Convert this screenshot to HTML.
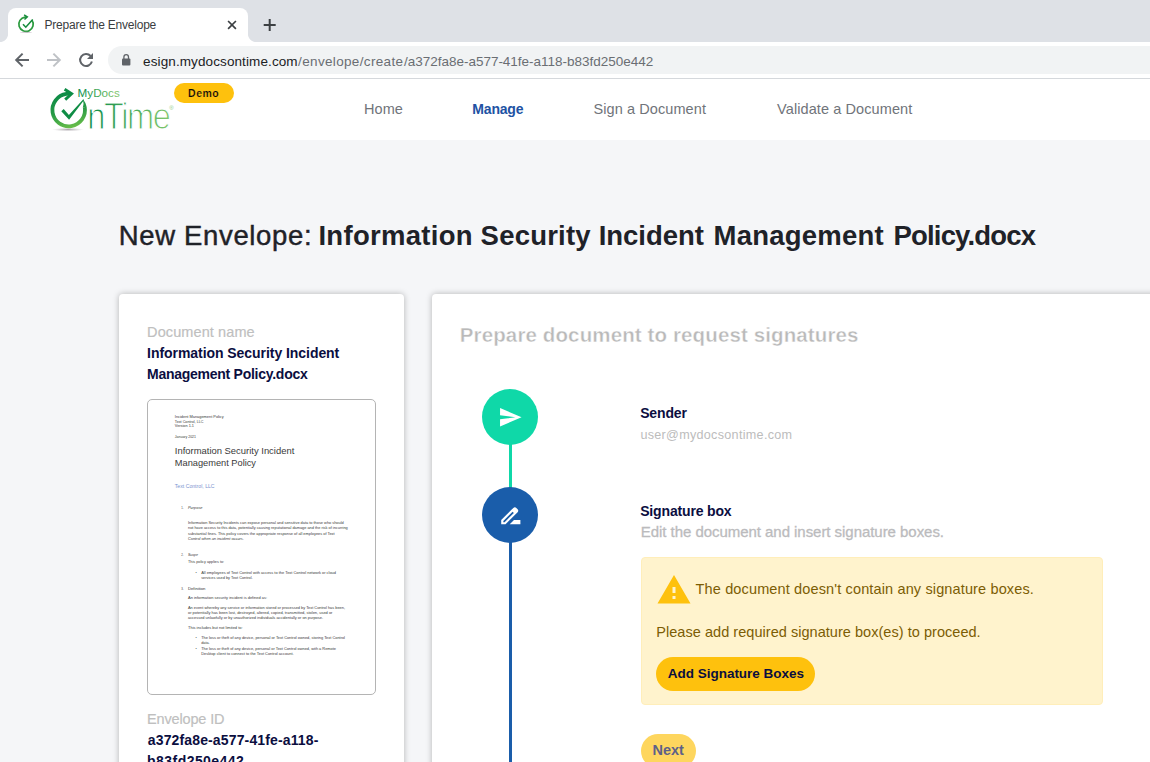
<!DOCTYPE html>
<html lang="en">
<head>
<meta charset="utf-8">
<title>Prepare the Envelope</title>
<style>
*{box-sizing:border-box;margin:0;padding:0}
html,body{width:1150px;height:762px;overflow:hidden;background:#f5f6f8;font-family:"Liberation Sans",sans-serif;}
body{position:relative}
.abs{position:absolute}
.t{position:absolute;white-space:nowrap;line-height:20px}
svg{position:absolute;overflow:visible}
/* browser chrome */
#tabbar{left:0;top:0;width:1150px;height:42px;background:#dee1e6}
#tab{left:8px;top:8px;width:240px;height:34px;background:#fff;border-radius:8px 8px 0 0}
#tabl{left:0;top:34px;width:8px;height:8px;background:radial-gradient(circle at 0 0,#dee1e6 7.6px,#fff 8.4px)}
#tabr{left:248px;top:34px;width:8px;height:8px;background:radial-gradient(circle at 100% 0,#dee1e6 7.6px,#fff 8.4px)}
#toolbar{left:0;top:42px;width:1150px;height:36px;background:#fff}
#tbline{left:0;top:78px;width:1150px;height:1px;background:#d5d8dc}
#omni{left:108px;top:46px;width:1100px;height:28px;border-radius:14px;background:#f1f3f4}
/* site header */
#hdr{left:0;top:79px;width:1150px;height:61px;background:#fff}
#demo{left:174px;top:83px;width:60px;height:20px;border-radius:10px;background:#fec10d}
/* cards */
.card{background:#fff;border-radius:4px;box-shadow:0 0 6px rgba(0,0,0,.27)}
#lcard{left:119px;top:294px;width:285px;height:500px}
#rcard{left:432px;top:294px;width:760px;height:500px}
#thumb{left:147px;top:399px;width:229px;height:296px;border:1px solid #b4b4b4;border-radius:5px;background:#fff}
/* timeline */
#c1{left:482px;top:389px;width:56px;height:56px;border-radius:50%;background:#0fd8a8}
#c2{left:482px;top:487px;width:56px;height:56px;border-radius:50%;background:#1a5daa}
#ln1{left:509px;top:440px;width:3px;height:50px;background:#0fd8a8}
#ln2{left:509px;top:540px;width:3px;height:240px;background:#1a5daa}
/* alert */
#alert{left:641px;top:557px;width:462px;height:148px;background:#fff3cd;border:1px solid #ffeeba;border-radius:4px}
#btn1{left:656px;top:657px;width:159px;height:34px;border-radius:17px;background:#fec10d}
#btn2{left:641px;top:734px;width:55px;height:34px;border-radius:17px;background:#fed65e}
</style>
</head>
<body>
<!-- ===== browser chrome ===== -->
<div id="tabbar" class="abs"></div>
<div id="tab" class="abs"></div>
<div id="tabl" class="abs"></div>
<div id="tabr" class="abs"></div>
<div id="toolbar" class="abs"></div>
<div id="tbline" class="abs"></div>
<div id="omni" class="abs"></div>
<svg id="chromeicons" style="left:0;top:0" width="300" height="80" viewBox="0 0 300 80">
  <!-- favicon -->
  <g fill="none" stroke="#2b9b3e" stroke-linecap="butt">
    <path d="M31.9 20.1 A7.2 7.2 0 1 1 25 17.1 L26.4 16.9" stroke-width="1.7"/>
    <path d="M24.1 14.9 L27.3 16.9 L24.5 19.5" stroke-width="1.5" stroke="#188c3e"/>
    <path d="M23 24.3 L25.8 27.2 L32.7 19.5" stroke-width="1.6" stroke="#188c3e"/>
  </g>
  <ellipse cx="26" cy="32.4" rx="6" ry="0.6" fill="#b9a9b9" opacity=".6"/>
  <!-- close / plus -->
  <path d="M228.1 21 L235.9 28.8 M235.9 21 L228.1 28.8" stroke="#3c4043" stroke-width="1.7" fill="none"/>
  <path d="M263.7 25 H275.7 M269.7 19 V31" stroke="#3c4043" stroke-width="2" fill="none"/>
  <!-- back -->
  <path d="M29 60 H17 M22.6 53.6 L16.2 60 L22.6 66.4" stroke="#5f6368" stroke-width="2" fill="none"/>
  <!-- forward -->
  <path d="M47 60 H59 M53.4 53.6 L59.8 60 L53.4 66.4" stroke="#bfc2c6" stroke-width="2" fill="none"/>
  <!-- reload -->
  <path d="M90.6 56 A6 6 0 1 0 91.9 61.6" stroke="#5f6368" stroke-width="2" fill="none"/>
  <path d="M93 53 V59 H87 Z" fill="#5f6368"/>
  <!-- lock -->
  <rect x="122" y="58.6" width="8.4" height="6.8" rx="1" fill="#5f6368"/>
  <path d="M123.9 59 V57 A2.3 2.3 0 0 1 128.5 57 V59" stroke="#5f6368" stroke-width="1.3" fill="none"/>
</svg>

<!-- ===== site header ===== -->
<div id="hdr" class="abs"></div>
<div id="demo" class="abs"></div>
<svg id="logo" style="left:40px;top:80px" width="140" height="60" viewBox="40 80 140 60">
  <defs>
    <linearGradient id="g1" gradientUnits="userSpaceOnUse" x1="62" y1="92" x2="70" y2="128"><stop offset="0" stop-color="#0a8a47"/><stop offset="0.55" stop-color="#279a45"/><stop offset="1" stop-color="#69bd4a"/></linearGradient>
    <linearGradient id="g2" x1="0" y1="0" x2="1" y2="0"><stop offset="0" stop-color="#0a8a47"/><stop offset="1" stop-color="#85c96f"/></linearGradient>
    <linearGradient id="g4" gradientUnits="userSpaceOnUse" x1="0" y1="0" x2="96" y2="0"><stop offset="0" stop-color="#0a8a47"/><stop offset="1" stop-color="#85c96f"/></linearGradient>
    <radialGradient id="g3"><stop offset="0" stop-color="#8a7a8a" stop-opacity=".7"/><stop offset="1" stop-color="#b0b0b0" stop-opacity="0"/></radialGradient>
  </defs>
  <ellipse cx="68" cy="129.6" rx="16" ry="1.8" fill="url(#g3)"/>
  <path d="M84.75 107.17 A16.3 16.3 0 1 1 66.4 93.9 L70 93.6" stroke="url(#g1)" stroke-width="3.8" fill="none"/>
  <path d="M86.62 106.84 A18.2 18.2 0 0 0 82.9 98.9 Q84.1 103.6 82.85 107.5 Z" fill="url(#g1)"/>
  <path d="M64.6 89.2 L71.6 93.7 L65.2 99.6" stroke="#0d8c46" stroke-width="2.9" fill="none"/>
  <path d="M61.3 111.3 L63.7 109 L68.9 114.9 L83.3 99.2 L83.9 100.2 L69.1 119.8 Z" fill="#0f8d45"/>
  <text x="77.6" y="96.5" font-family="Liberation Sans, sans-serif" font-size="11.4" fill="url(#g2)" textLength="42.2" lengthAdjust="spacingAndGlyphs">MyDocs</text>
  <text transform="translate(87.2 129.3) scale(0.895 1)" x="0" y="0" font-family="Liberation Sans, sans-serif" font-size="36.5" letter-spacing="-1.6" fill="url(#g4)" stroke="#fff" stroke-width="1.15" stroke-linejoin="round">nTime</text>
  <text x="169.2" y="110.4" font-family="Liberation Sans, sans-serif" font-size="6" fill="#8fcd86">®</text>
</svg>

<!-- ===== cards ===== -->
<div id="lcard" class="abs card"></div>
<div id="thumb" class="abs"></div>
<svg id="thumbsvg" style="left:148px;top:400px" width="227" height="294" viewBox="148 400 227 294" font-family="Liberation Sans, sans-serif">
<text x="174.8" y="417.8" font-size="3.6" fill="#383838"  textLength="48.9" lengthAdjust="spacingAndGlyphs">Incident Management Policy</text>
<text x="174.8" y="422.5" font-size="3.6" fill="#383838"  textLength="28.7" lengthAdjust="spacingAndGlyphs">Text Control, LLC</text>
<text x="174.8" y="427.4" font-size="3.6" fill="#383838"  textLength="19.2" lengthAdjust="spacingAndGlyphs">Version 1.1</text>
<text x="174.8" y="437.5" font-size="3.6" fill="#383838"  textLength="21.2" lengthAdjust="spacingAndGlyphs">January 2021</text>
<text x="174.8" y="487.6" font-size="4.6" fill="#7b93cf"  textLength="39.8" lengthAdjust="spacingAndGlyphs">Text Control, LLC</text>
<text x="181.3" y="509.2" font-size="4.1" fill="#383838"  textLength="2.3" lengthAdjust="spacingAndGlyphs">1.</text>
<text x="188.0" y="509.2" font-size="4.1" fill="#333" font-style="italic" textLength="14.5" lengthAdjust="spacingAndGlyphs">Purpose</text>
<text x="188.0" y="523.9" font-size="4.1" fill="#383838"  textLength="155.7" lengthAdjust="spacingAndGlyphs">Information Security Incidents can expose personal and sensitive data to those who should</text>
<text x="188.0" y="529.4" font-size="4.1" fill="#383838"  textLength="159.7" lengthAdjust="spacingAndGlyphs">not have access to this data, potentially causing reputational damage and the risk of incurring</text>
<text x="188.0" y="534.8" font-size="4.1" fill="#383838"  textLength="146.6" lengthAdjust="spacingAndGlyphs">substantial fines. This policy covers the appropriate response of all employees of Text</text>
<text x="188.0" y="540.1" font-size="4.1" fill="#383838" font-style="italic" textLength="55.8" lengthAdjust="spacingAndGlyphs">Control when an incident occurs.</text>
<text x="181.3" y="555.5" font-size="4.1" fill="#383838"  textLength="2.3" lengthAdjust="spacingAndGlyphs">2.</text>
<text x="188.0" y="555.5" font-size="4.1" fill="#333" font-style="italic" textLength="10.0" lengthAdjust="spacingAndGlyphs">Scope</text>
<text x="188.0" y="563.2" font-size="4.1" fill="#383838"  textLength="36.1" lengthAdjust="spacingAndGlyphs">This policy applies to:</text>
<text x="195.6" y="573.7" font-size="4.1" fill="#333"  textLength="1.2" lengthAdjust="spacingAndGlyphs">•</text>
<text x="201.2" y="573.7" font-size="4.1" fill="#383838"  textLength="134.8" lengthAdjust="spacingAndGlyphs">All employees of Text Control with access to the Text Control network or cloud</text>
<text x="201.2" y="578.9" font-size="4.1" fill="#383838"  textLength="51.5" lengthAdjust="spacingAndGlyphs">services used by Text Control.</text>
<text x="181.3" y="590.1" font-size="4.1" fill="#383838"  textLength="2.3" lengthAdjust="spacingAndGlyphs">3.</text>
<text x="188.0" y="590.1" font-size="4.1" fill="#333"  textLength="17.4" lengthAdjust="spacingAndGlyphs">Definition</text>
<text x="188.0" y="598.5" font-size="4.1" fill="#383838"  textLength="79.0" lengthAdjust="spacingAndGlyphs">An information security incident is defined as:</text>
<text x="188.0" y="608.8" font-size="4.1" fill="#383838"  textLength="157.0" lengthAdjust="spacingAndGlyphs">An event whereby any service or information stored or processed by Text Control has been,</text>
<text x="188.0" y="613.8" font-size="4.1" fill="#383838"  textLength="144.4" lengthAdjust="spacingAndGlyphs">or potentially has been lost, destroyed, altered, copied, transmitted, stolen, used or</text>
<text x="188.0" y="618.9" font-size="4.1" fill="#383838"  textLength="135.0" lengthAdjust="spacingAndGlyphs">accessed unlawfully or by unauthorized individuals accidentally or on purpose.</text>
<text x="188.0" y="628.7" font-size="4.1" fill="#383838"  textLength="54.6" lengthAdjust="spacingAndGlyphs">This includes but not limited to:</text>
<text x="195.6" y="639.0" font-size="4.1" fill="#333"  textLength="1.2" lengthAdjust="spacingAndGlyphs">•</text>
<text x="201.2" y="639.0" font-size="4.1" fill="#383838"  textLength="143.8" lengthAdjust="spacingAndGlyphs">The loss or theft of any device, personal or Text Control owned, storing Text Control</text>
<text x="201.2" y="644.1" font-size="4.1" fill="#383838"  textLength="8.4" lengthAdjust="spacingAndGlyphs">data.</text>
<text x="195.6" y="650.4" font-size="4.1" fill="#333"  textLength="1.2" lengthAdjust="spacingAndGlyphs">•</text>
<text x="201.2" y="650.4" font-size="4.1" fill="#383838"  textLength="134.8" lengthAdjust="spacingAndGlyphs">The loss or theft of any device, personal or Text Control owned, with a Remote</text>
<text x="201.2" y="655.4" font-size="4.1" fill="#383838"  textLength="92.4" lengthAdjust="spacingAndGlyphs">Desktop client to connect to the Text Control account.</text>
<text x="174.8" y="453.9" font-size="9.6" fill="#3a3a3a" textLength="119.5" lengthAdjust="spacingAndGlyphs">Information Security Incident</text>
<text x="174.8" y="466.4" font-size="9.6" fill="#3a3a3a" textLength="81.2" lengthAdjust="spacingAndGlyphs">Management Policy</text>
</svg>
<div id="rcard" class="abs card"></div>

<!-- timeline -->
<div id="ln1" class="abs"></div>
<div id="ln2" class="abs"></div>
<div id="c1" class="abs"></div>
<div id="c2" class="abs"></div>
<svg style="left:497.8px;top:404.7px" width="24.6" height="24.6" viewBox="0 0 24 24"><path d="M2.01 21L23 12 2.01 3 2 10l15 2-15 2z" fill="#fff"/></svg>
<svg style="left:497.6px;top:502.5px" width="25.6" height="25.6" viewBox="0 0 24 24"><path d="M18.41 5.8L17.2 4.590c-.780-.780-2.050-.780-2.830 0l-2.680 2.680L3 15.960V20h4.040l8.740-8.740 2.630-2.630c.790-.780.790-2.050 0-2.830zM6.210 18H5v-1.210l8.660-8.660 1.210 1.210L6.210 18zM11 20l4-4h6v4H11z" fill="#fff"/></svg>

<!-- alert -->
<div id="alert" class="abs"></div>
<svg style="left:655.5px;top:571.6px" width="36" height="36" viewBox="0 0 24 24"><path d="M1 21h22L12 2 1 21zm12-3h-2v-2h2v2zm0-4h-2v-4h2v4z" fill="#fec10d"/></svg>
<div id="btn1" class="abs"></div>
<div id="btn2" class="abs"></div>

<!-- ===== all text ===== -->
<div class="t" style="left:44.5px;top:14.7px;font-size:12px;font-weight:normal;color:#3a3d41;letter-spacing:-0.226px;">Prepare the Envelope</div>
<div class="t" style="left:143.1px;top:52.0px;font-size:13.5px;font-weight:normal;color:#202124;letter-spacing:0.105px;">esign.mydocsontime.com</div>
<div class="t" style="left:298.1px;top:52.0px;font-size:13.5px;font-weight:normal;color:#6a6e73;letter-spacing:0.340px;">/envelope/create</div>
<div class="t" style="left:404.0px;top:52.0px;font-size:13.5px;font-weight:normal;color:#6a6e73;letter-spacing:-0.014px;">/a372fa8e-a577-41fe-a118-b83fd250e442</div>
<div class="t" style="left:188.1px;top:82.8px;font-size:10.5px;font-weight:bold;color:#0a0a0a;letter-spacing:0.500px;-webkit-text-stroke:0.2px #fec10d;">Demo</div>
<div class="t" style="left:364.1px;top:98.7px;font-size:14.5px;font-weight:normal;color:#70747a;letter-spacing:0.000px;">Home</div>
<div class="t" style="left:472.3px;top:98.7px;font-size:14px;font-weight:bold;color:#2152a3;letter-spacing:-0.180px;">Manage</div>
<div class="t" style="left:593.5px;top:98.7px;font-size:14.5px;font-weight:normal;color:#70747a;letter-spacing:0.086px;">Sign a Document</div>
<div class="t" style="left:777.1px;top:98.7px;font-size:14.5px;font-weight:normal;color:#70747a;letter-spacing:0.089px;">Validate a Document</div>
<div class="t" style="left:118.8px;top:225.7px;font-size:27.5px;font-weight:normal;color:#1f2228;letter-spacing:0.650px;-webkit-text-stroke:0.45px #1f2228;">New Envelope:</div>
<div class="t" style="left:318.4px;top:225.7px;font-size:27.5px;font-weight:bold;color:#1f2228;letter-spacing:0.300px;">Information</div>
<div class="t" style="left:480.6px;top:225.7px;font-size:27.5px;font-weight:bold;color:#1f2228;letter-spacing:0.214px;">Security</div>
<div class="t" style="left:598.7px;top:225.7px;font-size:27.5px;font-weight:bold;color:#1f2228;letter-spacing:-0.029px;">Incident</div>
<div class="t" style="left:713.5px;top:225.7px;font-size:27.5px;font-weight:bold;color:#1f2228;letter-spacing:0.222px;">Management</div>
<div class="t" style="left:893.6px;top:225.7px;font-size:27.5px;font-weight:bold;color:#1f2228;letter-spacing:-0.840px;">Policy.docx</div>
<div class="t" style="left:147.1px;top:322.2px;font-size:14.5px;font-weight:normal;color:#bfbfbf;letter-spacing:0.100px;-webkit-text-stroke:0.2px #bfbfbf;">Document name</div>
<div class="t" style="left:147.1px;top:343.0px;font-size:14px;font-weight:bold;color:#0b0e3f;letter-spacing:-0.054px;">Information Security Incident</div>
<div class="t" style="left:147.1px;top:363.9px;font-size:14px;font-weight:bold;color:#0b0e3f;letter-spacing:-0.267px;">Management Policy.docx</div>
<div class="t" style="left:147.1px;top:708.8px;font-size:14.5px;font-weight:normal;color:#bfbfbf;letter-spacing:-0.160px;-webkit-text-stroke:0.2px #bfbfbf;">Envelope ID</div>
<div class="t" style="left:147.8px;top:729.7px;font-size:14px;font-weight:bold;color:#0b0e3f;letter-spacing:0.139px;">a372fa8e-a577-41fe-a118-</div>
<div class="t" style="left:147.1px;top:750.7px;font-size:14px;font-weight:bold;color:#0b0e3f;letter-spacing:0.445px;">b83fd250e442</div>
<div class="t" style="left:459.8px;top:324.7px;font-size:20.5px;font-weight:bold;color:#b9b9b9;letter-spacing:0.122px;-webkit-text-stroke:0.4px #fff;">Prepare document to request signatures</div>
<div class="t" style="left:640.2px;top:402.8px;font-size:14px;font-weight:bold;color:#0b0e3f;letter-spacing:-0.160px;">Sender</div>
<div class="t" style="left:640.4px;top:424.7px;font-size:12.6px;font-weight:normal;color:#bcbcbc;letter-spacing:0.295px;">user@mydocsontime.com</div>
<div class="t" style="left:640.2px;top:500.9px;font-size:14px;font-weight:bold;color:#0b0e3f;letter-spacing:-0.158px;">Signature box</div>
<div class="t" style="left:640.8px;top:522.0px;font-size:15px;font-weight:normal;color:#bbbbbd;letter-spacing:-0.045px;-webkit-text-stroke:0.3px #bbbbbd;">Edit the document and insert signature boxes.</div>
<div class="t" style="left:695.6px;top:578.5px;font-size:14.5px;font-weight:normal;color:#7c5d04;letter-spacing:0.138px;">The document doesn't contain any signature boxes.</div>
<div class="t" style="left:656.3px;top:622.0px;font-size:14.5px;font-weight:normal;color:#7c5d04;letter-spacing:0.040px;">Please add required signature box(es) to proceed.</div>
<div class="t" style="left:667.8px;top:664.0px;font-size:13.5px;font-weight:bold;color:#0b0e3f;letter-spacing:-0.017px;">Add Signature Boxes</div>
<div class="t" style="left:652.6px;top:739.8px;font-size:14.5px;font-weight:bold;color:#5d6188;letter-spacing:-0.100px;">Next</div>
</body>
</html>
